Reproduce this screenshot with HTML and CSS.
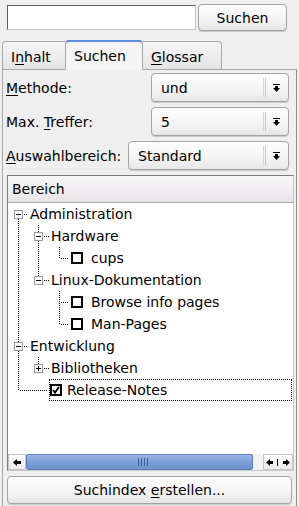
FILE: index.html
```html
<!DOCTYPE html>
<html lang="de">
<head>
	<meta charset="utf-8">
	<title>Suchen</title>
	<link rel="stylesheet" href="styles.css">
</head>
<body>
	<div class="top">
		<div class="search"></div>
		<div class="btn btn-search">Suchen</div>
	</div>

	<div class="tabs">
		<div class="tab tab-inhalt"><span>I<u>n</u>halt</span></div>
		<div class="tab tab-active tab-suchen"><span>Suchen</span></div>
		<div class="tab tab-glossar"><span><u>G</u>lossar</span></div>
	</div>

	<div class="panel">
		<div class="frow">
			<span class="flabel"><u>M</u>ethode:</span>
			<div class="combo"><span class="cval">und</span><span class="csep"></span>
				<svg class="carrow" width="7" height="8"><rect x="0" y="0" width="7" height="1"/><rect x="2" y="2" width="3" height="2"/><polygon points="0,4 7,4 3.5,8"/></svg></div>
		</div>
		<div class="frow">
			<span class="flabel">Max. <u>T</u>reffer:</span>
			<div class="combo"><span class="cval">5</span><span class="csep"></span>
				<svg class="carrow" width="7" height="8"><rect x="0" y="0" width="7" height="1"/><rect x="2" y="2" width="3" height="2"/><polygon points="0,4 7,4 3.5,8"/></svg></div>
		</div>
		<div class="frow">
			<span class="flabel flabel-short"><u>A</u>uswahlbereich:</span>
			<div class="combo"><span class="cval">Standard</span><span class="csep"></span>
				<svg class="carrow" width="7" height="8"><rect x="0" y="0" width="7" height="1"/><rect x="2" y="2" width="3" height="2"/><polygon points="0,4 7,4 3.5,8"/></svg></div>
		</div>

		<div class="list">
			<div class="list-head">Bereich</div>
			<div class="list-body">
				<!-- Administration -->
				<div class="tr">
					<svg class="c0" width="20" height="22"><line class="dl" x1="10.5" y1="16" x2="10.5" y2="22"/><line class="dl" x1="16" y1="11.5" x2="20" y2="11.5"/><rect class="bx" x="6.5" y="7.5" width="8" height="8"/><rect x="8" y="11" width="5" height="1"/></svg>
					<span class="txt">Administration</span>
				</div>
				<!-- Hardware -->
				<div class="tr">
					<svg class="c0" width="20" height="22"><line class="dl" x1="10.5" y1="0" x2="10.5" y2="22"/></svg>
					<svg class="c1" width="21" height="22"><line class="dl" x1="10.5" y1="0" x2="10.5" y2="7"/><line class="dl" x1="10.5" y1="16" x2="10.5" y2="22"/><line class="dl" x1="16" y1="11.5" x2="21" y2="11.5"/><rect class="bx" x="6.5" y="7.5" width="8" height="8"/><rect x="8" y="11" width="5" height="1"/></svg>
					<span class="txt">Hardware</span>
				</div>
				<!-- cups -->
				<div class="tr">
					<svg class="c0" width="20" height="22"><line class="dl" x1="10.5" y1="0" x2="10.5" y2="22"/></svg>
					<svg class="c1" width="21" height="22"><line class="dl" x1="10.5" y1="0" x2="10.5" y2="22"/></svg>
					<svg class="c2" width="20" height="22"><line class="dl" x1="10.5" y1="0" x2="10.5" y2="11"/><line class="dl" x1="12" y1="11.5" x2="20" y2="11.5"/></svg>
					<span class="chk"></span><span class="txt">cups</span>
				</div>
				<!-- Linux-Dokumentation -->
				<div class="tr">
					<svg class="c0" width="20" height="22"><line class="dl" x1="10.5" y1="0" x2="10.5" y2="22"/></svg>
					<svg class="c1" width="21" height="22"><line class="dl" x1="10.5" y1="0" x2="10.5" y2="7"/><line class="dl" x1="16" y1="11.5" x2="21" y2="11.5"/><rect class="bx" x="6.5" y="7.5" width="8" height="8"/><rect x="8" y="11" width="5" height="1"/></svg>
					<span class="txt">Linux-Dokumentation</span>
				</div>
				<!-- Browse info pages -->
				<div class="tr">
					<svg class="c0" width="20" height="22"><line class="dl" x1="10.5" y1="0" x2="10.5" y2="22"/></svg>
					<svg class="c1" width="21" height="22"></svg>
					<svg class="c2" width="20" height="22"><line class="dl" x1="10.5" y1="0" x2="10.5" y2="22"/><line class="dl" x1="12" y1="11.5" x2="20" y2="11.5"/></svg>
					<span class="chk"></span><span class="txt">Browse info pages</span>
				</div>
				<!-- Man-Pages -->
				<div class="tr">
					<svg class="c0" width="20" height="22"><line class="dl" x1="10.5" y1="0" x2="10.5" y2="22"/></svg>
					<svg class="c1" width="21" height="22"></svg>
					<svg class="c2" width="20" height="22"><line class="dl" x1="10.5" y1="0" x2="10.5" y2="11"/><line class="dl" x1="12" y1="11.5" x2="20" y2="11.5"/></svg>
					<span class="chk"></span><span class="txt">Man-Pages</span>
				</div>
				<!-- Entwicklung -->
				<div class="tr">
					<svg class="c0" width="20" height="22"><line class="dl" x1="10.5" y1="0" x2="10.5" y2="7"/><line class="dl" x1="10.5" y1="16" x2="10.5" y2="22"/><line class="dl" x1="16" y1="11.5" x2="20" y2="11.5"/><rect class="bx" x="6.5" y="7.5" width="8" height="8"/><rect x="8" y="11" width="5" height="1"/></svg>
					<span class="txt">Entwicklung</span>
				</div>
				<!-- Bibliotheken -->
				<div class="tr">
					<svg class="c0" width="20" height="22"><line class="dl" x1="10.5" y1="0" x2="10.5" y2="22"/></svg>
					<svg class="c1" width="21" height="22"><line class="dl" x1="10.5" y1="0" x2="10.5" y2="7"/><line class="dl" x1="16" y1="11.5" x2="21" y2="11.5"/><rect class="bx" x="6.5" y="7.5" width="8" height="8"/><rect x="8" y="11" width="5" height="1"/><rect x="10" y="9" width="1" height="5"/></svg>
					<span class="txt">Bibliotheken</span>
				</div>
				<!-- Release-Notes -->
				<div class="tr">
					<svg class="c0" width="20" height="22"><line class="dl" x1="10.5" y1="0" x2="10.5" y2="11"/><line class="dl" x1="12" y1="11.5" x2="20" y2="11.5"/></svg>
					<svg class="c1" width="21" height="22"><line class="dl" x1="0" y1="11.5" x2="20" y2="11.5"/></svg>
					<div class="focus">
						<span class="chk chk-on"><svg width="8" height="8"><polyline points="1,4 3,6.5 7,1" fill="none" stroke="#000" stroke-width="2"/></svg></span><span class="txt">Release-Notes</span>
					</div>
				</div>
			</div>
			<div class="hscroll">
				<div class="sb-btn sb-left">
					<svg width="8" height="7"><polygon points="0,3.5 4,0 4,2 8,2 8,5 4,5 4,7"/></svg>
				</div>
				<div class="sb-track">
					<div class="sb-slider">
						<svg width="10" height="8"><rect x="0" y="0" width="1" height="8"/><rect x="3" y="0" width="1" height="8"/><rect x="6" y="0" width="1" height="8"/><rect x="9" y="0" width="1" height="8"/></svg>
					</div>
				</div>
				<div class="sb-btn sb-right">
					<svg width="24" height="7"><polygon points="0,3.5 4,0 4,2 7,2 7,5 4,5 4,7"/><rect x="11" y="0" width="1" height="7"/><polygon points="24,3.5 20,0 20,2 17,2 17,5 20,5 20,7"/></svg>
				</div>
			</div>
		</div>

		<div class="btn btn-index"><span>Suchindex <u>e</u>rstellen...</span></div>
	</div>
</body>
</html>
```

FILE: styles.css
```css
body {
	margin: 0;
	width: 299px;
	height: 506px;
	overflow: hidden;
	background: #efefef;
	color: #000;
	font-family: "DejaVu Sans", Verdana, sans-serif;
	font-size: 14px;
}
u {
	text-decoration-thickness: 1px;
	text-underline-offset: 2px;
}

/* buttons */
.btn {
	box-sizing: border-box;
	display: flex;
	align-items: center;
	justify-content: center;
	border: 1px solid #a4a4a4;
	border-radius: 4px;
	background: linear-gradient(#fdfdfd, #f3f3f3 60%, #e6e6e6);
	box-shadow: 0 1px 0 #c9c9c9;
}

/* search bar */
.top {
	display: flex;
	align-items: flex-start;
	gap: 2px;
	height: 40px;
	box-sizing: border-box;
	padding: 4px 0 0 7px;
}
.search {
	box-sizing: border-box;
	width: 189px;
	height: 25px;
	margin-top: 1px;
	background: #fff;
	border: 1px solid;
	border-color: #5c5c5c #c6c6c6 #c6c6c6 #5c5c5c;
}
.btn-search {
	width: 89px;
	height: 27px;
}

/* tabs */
.tabs {
	display: flex;
	align-items: flex-end;
	height: 29px;
	padding-left: 2px;
}
.tab {
	box-sizing: border-box;
	height: 28px;
	display: flex;
	align-items: center;
	padding: 2px 0 0 8px;
	border: 1px solid #a8a8a8;
	border-bottom: none;
	border-radius: 4px 4px 0 0;
	background: linear-gradient(#f6f6f6, #e4e4e4);
}
.tab-inhalt {
	width: 63px;
	border-right: none;
	border-radius: 4px 0 0 0;
}
.tab-suchen {
	width: 78px;
}
.tab-glossar {
	width: 79px;
	border-left: none;
	border-radius: 0 4px 0 0;
}
.tab-active {
	position: relative;
	z-index: 1;
	height: 30px;
	margin-bottom: -1px;
	padding-top: 0;
	background: #f4f4f4;
	border-top: 2px solid #5d8fdc;
}

/* panel */
.panel {
	box-sizing: border-box;
	width: 295px;
	height: 437px;
	margin-left: 2px;
	padding: 3px 0 0 2px;
	border: 1px solid #a8a8a8;
	border-bottom: none;
	border-right-color: #8e8e8e;
}
.frow {
	display: flex;
	align-items: center;
	height: 29px;
	margin-bottom: 5px;
}
.flabel {
	width: 145px;
	padding-left: 1px;
	flex: none;
}
.flabel-short {
	width: 122px;
}
.combo {
	box-sizing: border-box;
	width: 139px;
	flex: 1;
	margin-right: 7px;
	height: 29px;
	display: flex;
	align-items: center;
	border: 1px solid #a4a4a4;
	border-radius: 4px;
	background: linear-gradient(#fdfdfd, #f4f4f4 60%, #e7e7e7);
	box-shadow: 0 1px 0 #c9c9c9;
}
.cval {
	flex: 1;
	padding-left: 9px;
}
.csep {
	width: 1px;
	height: 19px;
	border-left: 1px solid #d4d4d4;
	border-right: 1px solid #c4c4c4;
	margin-right: 7px;
}
.carrow {
	margin-right: 8px;
	fill: #000;
}

/* list view */
.list {
	box-sizing: border-box;
	width: 287px;
	height: 296px;
	margin: 4px 0 0 2px;
	display: flex;
	flex-direction: column;
	background: #fff;
	border: 1px solid #8c8c8c;
	border-color: #7a7a7a #c8c8c8 #c8c8c8 #7a7a7a;
}
.list-head {
	box-sizing: border-box;
	height: 27px;
	flex: none;
	display: flex;
	align-items: center;
	padding-left: 4px;
	background: linear-gradient(#f8f7f8, #efedef 60%, #e6e4e6);
	border-bottom: 1px solid #a9a9a9;
}
.list-body {
	flex: 1;
}
.tr {
	display: flex;
	align-items: center;
	height: 22px;
	white-space: nowrap;
}
.tr svg {
	flex: none;
	display: block;
}
.dl {
	stroke: #000;
	stroke-width: 1;
	stroke-dasharray: 1 1;
}
.bx {
	fill: #fff;
	stroke: #9a9a9a;
}
.txt {
	padding-left: 2px;
}
.chk {
	box-sizing: border-box;
	flex: none;
	width: 12px;
	height: 12px;
	margin: 0 6px 0 2px;
	border: 2px solid #000;
	background: #fff;
	display: flex;
	align-items: center;
	justify-content: center;
}
.focus {
	box-sizing: border-box;
	flex: 1;
	height: 22px;
	margin-right: 1px;
	display: flex;
	align-items: center;
	border: 1px dotted #000;
}
.focus .chk {
	margin-left: 0;
	margin-right: 3px;
}

/* horizontal scrollbar */
.hscroll {
	height: 16px;
	flex: none;
	display: flex;
	background: #f2f2f2;
}
.sb-btn {
	box-sizing: border-box;
	display: flex;
	align-items: center;
	justify-content: center;
	background: linear-gradient(#fdfdfd, #ececec);
	border: 1px solid #c4c4c4;
}
.sb-left {
	width: 18px;
}
.sb-right {
	width: 30px;
}
.sb-track {
	flex: 1;
	display: flex;
	padding-right: 10px;
}
.sb-slider {
	flex: 1;
	display: flex;
	align-items: center;
	justify-content: center;
	border: 1px solid #5f7fb7;
	border-radius: 2px;
	background: linear-gradient(#9ab7e6, #7c9fd8 50%, #6e92cf);
}
.sb-slider svg {
	fill: #3d5f9a;
	margin-left: 6px;
}
.btn-index {
	width: 285px;
	height: 28px;
	margin: 5px 0 0 2px;
}
```
